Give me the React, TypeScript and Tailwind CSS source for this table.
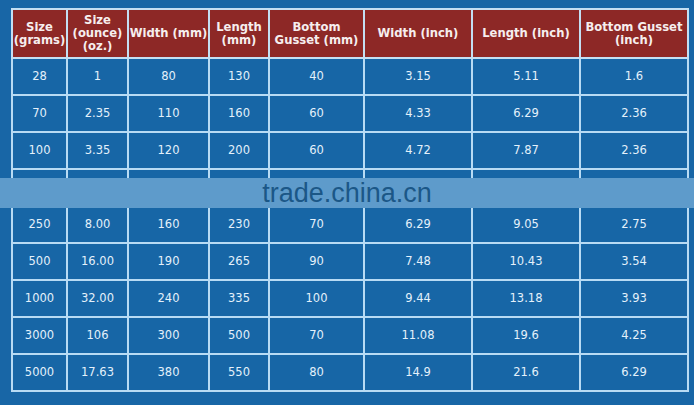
const headers = [
  ["Size", "(grams)"],
  ["Size", "(ounce)", "(oz.)"],
  ["Width (mm)"],
  ["Length", "(mm)"],
  ["Bottom", "Gusset (mm)"],
  ["Width (inch)"],
  ["Length (inch)"],
  ["Bottom Gusset", "(inch)"],
];

const widths = ["w-[55px]", "w-[61px]", "w-[81px]", "w-[60px]", "w-[95px]", "w-[108px]", "w-[108px]", "w-[108px]"];

const rows = [
  ["28", "1", "80", "130", "40", "3.15", "5.11", "1.6"],
  ["70", "2.35", "110", "160", "60", "4.33", "6.29", "2.36"],
  ["100", "3.35", "120", "200", "60", "4.72", "7.87", "2.36"],
  ["", "", "", "", "", "", "", ""],
  ["250", "8.00", "160", "230", "70", "6.29", "9.05", "2.75"],
  ["500", "16.00", "190", "265", "90", "7.48", "10.43", "3.54"],
  ["1000", "32.00", "240", "335", "100", "9.44", "13.18", "3.93"],
  ["3000", "106", "300", "500", "70", "11.08", "19.6", "4.25"],
  ["5000", "17.63", "380", "550", "80", "14.9", "21.6", "6.29"],
];

export default function App() {
  return (
    <div className="relative w-[694px] h-[405px] overflow-hidden bg-[#1866a6] pl-[11px] pt-[8px] font-['DejaVu_Sans',Verdana,sans-serif]">
      <table className="w-[678px] table-fixed border-collapse">
        <thead>
          <tr className="h-[49px]">
            {headers.map((h, i) => (
              <th
                key={i}
                className={`${widths[i]} whitespace-nowrap border-2 border-[#c4dff3] bg-[#8d2826] px-0 text-center text-[11.6px] font-bold leading-[13px] text-[#f6eeee]`}
              >
                {h.map((line, li) => (
                  <div key={li}>{line}</div>
                ))}
              </th>
            ))}
          </tr>
        </thead>
        <tbody>
          {rows.map((r, ri) => (
            <tr key={ri} className="h-[37px]">
              {r.map((c, ci) => (
                <td
                  key={ci}
                  className="border-2 border-[#b8dbf4] bg-[#1766a6] text-center text-[11.5px] text-[#e4f1fb]"
                >
                  {c}
                </td>
              ))}
            </tr>
          ))}
        </tbody>
      </table>

      {/* watermark band */}
      <div className="absolute left-0 top-[178px] flex h-[30px] w-full items-center justify-center bg-[#5e9bcb]">
        <span className="font-['Liberation_Sans',Arial,sans-serif] text-[27px] leading-none text-[#1b5787]">
          trade.china.cn
        </span>
      </div>
    </div>
  );
}
